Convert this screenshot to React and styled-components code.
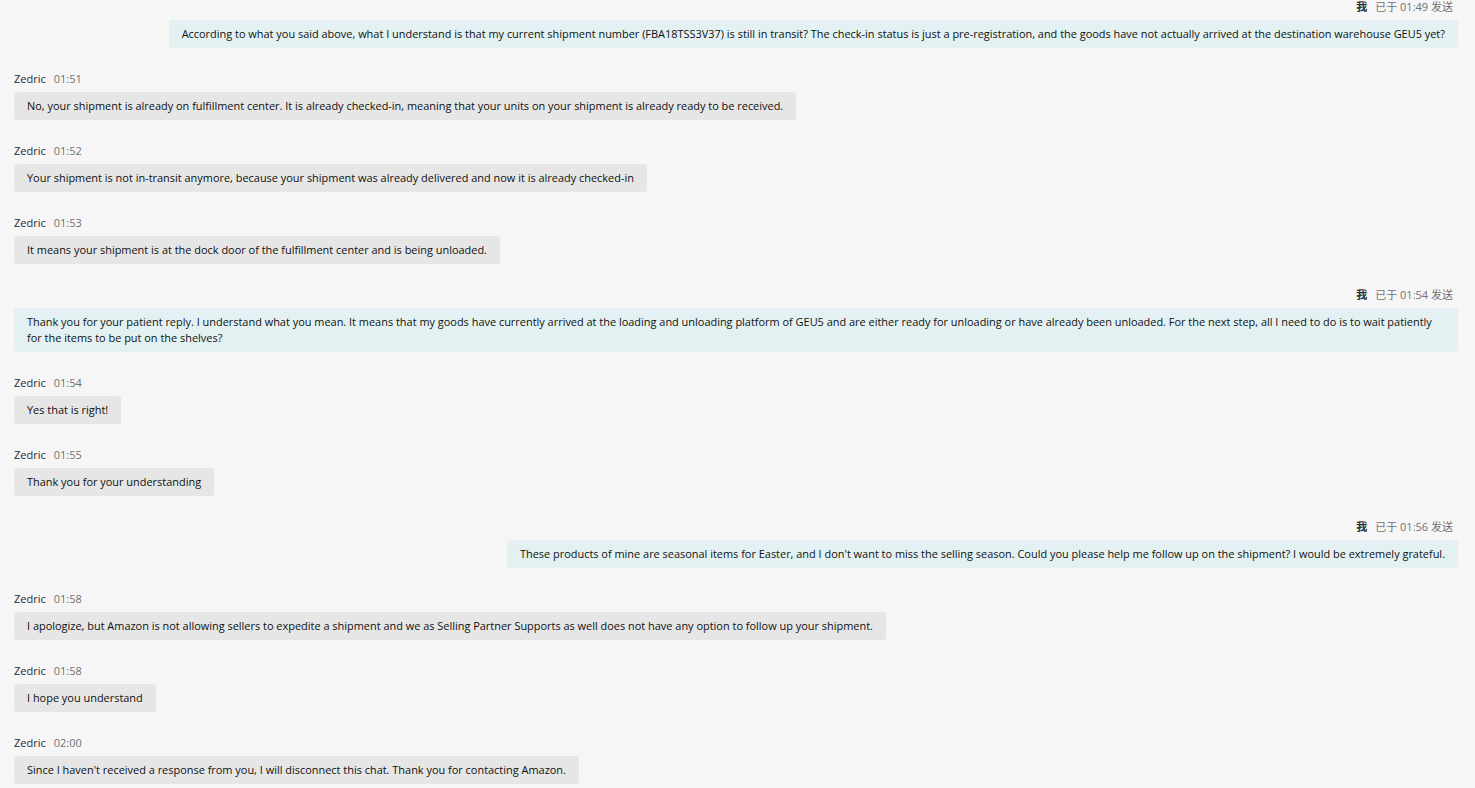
import React from 'react'
import styled, { createGlobalStyle } from 'styled-components'

const GlobalStyle = createGlobalStyle`
  html, body {
    margin: 0;
    padding: 0;
    background: #f6f6f6;
  }
  body {
    font-family: "Open Sans", "Noto Sans CJK SC", sans-serif;
    color: #0f1111;
  }
`

const Page = styled.div`
  height: 788px;
  overflow: hidden;
  padding: 0 17px 0 14px;
  display: flex;
  flex-direction: column;
  gap: 24px;
`

const Message = styled.div`
  display: flex;
  flex-direction: column;
  align-items: ${ props => props.mine ? 'flex-end' : 'flex-start' };
  gap: 6px;
`

const Meta = styled.div`
  display: flex;
  align-items: center;
  gap: 8px;
  height: 14px;
  font-size: 11px;
  line-height: 14px;
  padding-right: ${ props => props.mine ? '5px' : '0' };
`

const Name = styled.span`
  color: #232f3e;
  font-weight: ${ props => props.mine ? 600 : 400 };
`

const Time = styled.span`
  color: #6f7373;
`

const Bubble = styled.div`
  box-sizing: border-box;
  max-width: 100%;
  padding: 6px 13px;
  border-radius: 3px;
  background: ${ props => props.mine ? '#e3f1f2' : '#e6e6e6' };
  font-size: 10.95px;
  line-height: 16px;
  color: #0f1111;
`

const messages = [
  { mine: true, time: '01:49', text: 'According to what you said above, what I understand is that my current shipment number (FBA18TSS3V37) is still in transit? The check-in status is just a pre-registration, and the goods have not actually arrived at the destination warehouse GEU5 yet?' },
  { time: '01:51', text: 'No, your shipment is already on fulfillment center. It is already checked-in, meaning that your units on your shipment is already ready to be received.' },
  { time: '01:52', text: 'Your shipment is not in-transit anymore, because your shipment was already delivered and now it is already checked-in' },
  { time: '01:53', text: 'It means your shipment is at the dock door of the fulfillment center and is being unloaded.' },
  { mine: true, time: '01:54', text: 'Thank you for your patient reply. I understand what you mean. It means that my goods have currently arrived at the loading and unloading platform of GEU5 and are either ready for unloading or have already been unloaded. For the next step, all I need to do is to wait patiently for the items to be put on the shelves?' },
  { time: '01:54', text: 'Yes that is right!' },
  { time: '01:55', text: 'Thank you for your understanding' },
  { mine: true, time: '01:56', text: "These products of mine are seasonal items for Easter, and I don't want to miss the selling season. Could you please help me follow up on the shipment? I would be extremely grateful." },
  { time: '01:58', text: 'I apologize, but Amazon is not allowing sellers to expedite a shipment and we as Selling Partner Supports as well does not have any option to follow up your shipment.' },
  { time: '01:58', text: 'I hope you understand' },
  { time: '02:00', text: "Since I haven't received a response from you, I will disconnect this chat. Thank you for contacting Amazon." },
]

export default function App() {
  return (
    <Page>
      <GlobalStyle />
      { messages.map((m, i) => (
        <Message key={ i } mine={ m.mine }>
          { m.mine ? (
            <Meta mine>
              <Name mine>我</Name>
              <Time>已于 { m.time } 发送</Time>
            </Meta>
          ) : (
            <Meta>
              <Name>Zedric</Name>
              <Time>{ m.time }</Time>
            </Meta>
          ) }
          <Bubble mine={ m.mine }>{ m.text }</Bubble>
        </Message>
      )) }
    </Page>
  )
}
